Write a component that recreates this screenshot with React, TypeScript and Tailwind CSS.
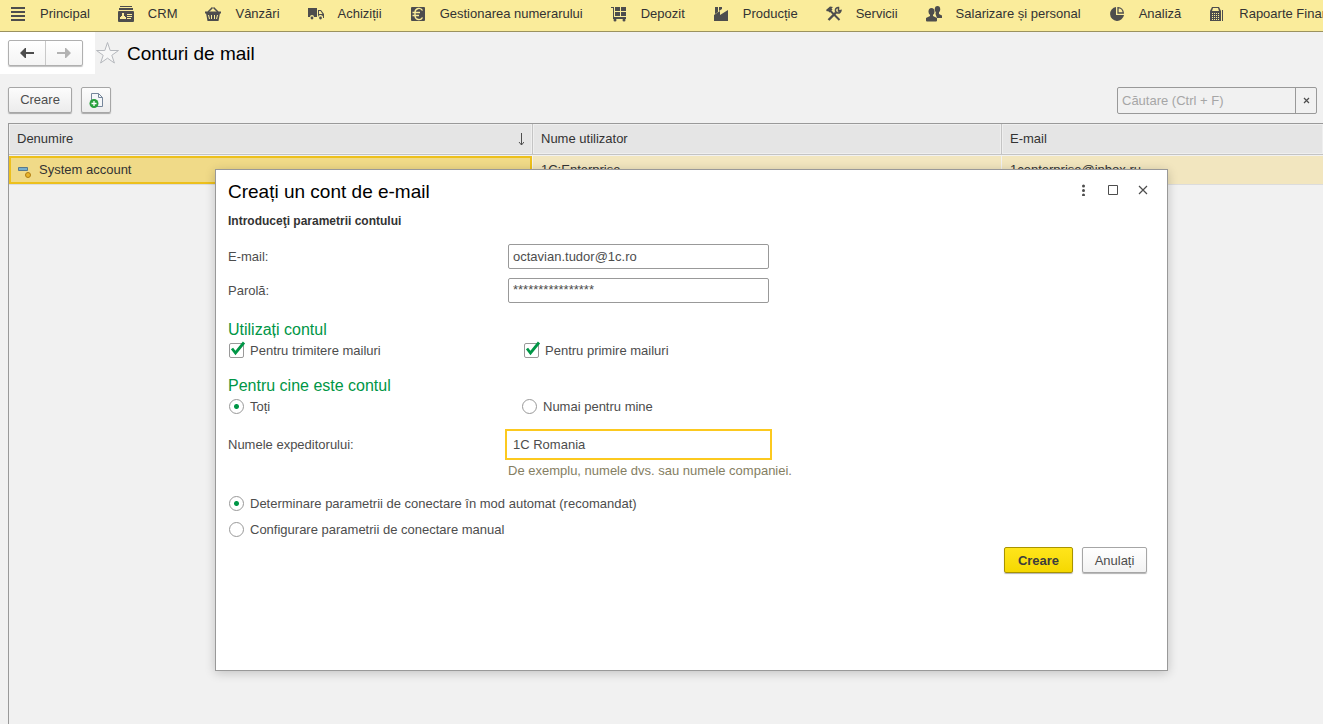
import { useState } from "react";
import type { ReactNode, InputHTMLAttributes } from "react";

interface IconProps {
  children: ReactNode;
}

function NavIcon({ children }: IconProps) {
  return (
    <svg viewBox="0 0 16 16" className="size-4 shrink-0 fill-[#4d4d4d]" aria-hidden="true">
      {children}
    </svg>
  );
}

const sections: { label: string; icon: ReactNode }[] = [
  {
    label: "Principal",
    icon: <path d="M1 1h14v2H1zM1 5h14v2H1zM1 9h14v2H1zM1 13h14v2H1z" />,
  },
  {
    label: "CRM",
    icon: (
      <>
        <path d="M2 0h12v1H2zM1 2h14v2H1z" />
        <path
          fillRule="evenodd"
          d="M1 5h14a1 1 0 0 1 1 1v9a1 1 0 0 1-1 1H1a1 1 0 0 1-1-1V6a1 1 0 0 1 1-1zM4 7v3H3v1H2v2h6v-2H7v-1H6V7zM9 8h5v1H9zM9 10h5v1H9zM9 12h4v1H9z"
        />
      </>
    ),
  },
  {
    label: "Vânzări",
    icon: (
      <>
        <path d="M3 6L7.500 1.500M13 6L8.500 1.500" fill="none" stroke="#4d4d4d" strokeWidth="1.500" />
        <path d="M0 5.500h16v2H0z" />
        <path
          fillRule="evenodd"
          d="M1 7h14l-1.500 8h-11zM3 9l1 4h1L4 9zM6 9v4h1V9zM9 9v4h1V9zM12 9l-1 4h1l1-4z"
        />
      </>
    ),
  },
  {
    label: "Achiziții",
    icon: (
      <>
        <path d="M0 2h9v9H6a2 2 0 0 0-4 0H0z" />
        <circle cx="4" cy="12" r="1.400" />
        <circle cx="12.500" cy="12" r="1.400" />
        <path
          fillRule="evenodd"
          d="M10 4h3l3 4v4h-1a2.500 2.500 0 0 0-5-1zM11 5v3h3.500L12.500 5z"
        />
      </>
    ),
  },
  {
    label: "Gestionarea numerarului",
    icon: (
      <>
        <rect x="1" y="1" width="14" height="14" rx="1" />
        <path
          d="M12.500 4.500A4 4 0 0 0 5 6v4a4 4 0 0 0 7.500 1.500M2.500 6.500H10M2.500 9.500H9"
          fill="none"
          stroke="#faec9b"
          strokeWidth="1.400"
        />
      </>
    ),
  },
  {
    label: "Depozit",
    icon: (
      <>
        <path d="M0 1h3v10h12v2H2V2H0z" />
        <path d="M4 1h5v4H4zM10 1h5v4h-5zM4 6h5v4H4zM10 6h5v4h-5z" />
        <circle cx="4" cy="14" r="1.500" />
        <circle cx="13" cy="14" r="1.500" />
      </>
    ),
  },
  {
    label: "Producție",
    icon: <path d="M2 1h3v5L2 8zM6 1h3v2L6 5zM1 9l6-4v4l8-5v11H1z" />,
  },
  {
    label: "Servicii",
    icon: (
      <>
        <path d="M2.500 14L10 6.500" fill="none" stroke="#4d4d4d" strokeWidth="2.400" />
        <path d="M4 4.500L13.500 14" fill="none" stroke="#4d4d4d" strokeWidth="2" />
        <path d="M0 4l4-3.500L7 1 5.500 2.500l1 1L3.500 6.500 2 5 1 5.500z" />
        <path
          d="M12.500 1.500a2.800 2.800 0 1 0 2.500 3L12.500 5z"
          fill="none"
          stroke="#4d4d4d"
          strokeWidth="1.500"
        />
      </>
    ),
  },
  {
    label: "Salarizare și personal",
    icon: (
      <>
        <ellipse cx="11.500" cy="3.200" rx="2.700" ry="3.200" />
        <path d="M10 5h3v3l3 1.500V12h-5L9.500 8z" />
        <ellipse cx="5.500" cy="5.500" rx="3" ry="3.500" />
        <path d="M4 8h3v2l4 2v2.500a1 1 0 0 1-1 1H1a1 1 0 0 1-1-1V12l4-2z" />
      </>
    ),
  },
  {
    label: "Analiză",
    icon: (
      <>
        <path d="M7 1v8h8A7 7 0 1 1 7 1z" />
        <path
          d="M9 1.700V7h5.300A5.500 5.500 0 0 0 9 1.700z"
          fill="none"
          stroke="#4d4d4d"
          strokeWidth="1.300"
        />
      </>
    ),
  },
  {
    label: "Rapoarte Financiare",
    icon: (
      <>
        <path
          fillRule="evenodd"
          d="M3 1h7l2 4v10H1V5zM4 2L3 5h7L9 2zM3 7v1h1V7zM5 7v1h1V7zM7 7v1h1V7zM9 7v1h1V7zM3 9v1h1V9zM5 9v1h1V9zM7 9v1h1V9zM9 9v1h1V9zM3 11v1h1v-1zM5 11v1h1v-1zM7 11v1h1v-1zM9 11v1h1v-1zM3 13v1h1v-1zM5 13v1h1v-1zM7 13v1h1v-1zM9 13v1h1v-1z"
        />
        <path d="M13 4h1v11h-1z" />
      </>
    ),
  },
];

const accounts = [
  { name: "System account", user: "1C:Enterprise", email: "1centerprise@inbox.ru" },
];

function SectionsBar() {
  return (
    <nav className="flex h-8 shrink-0 items-center gap-7 overflow-hidden border-b border-[#9b925f] bg-[#faec9b] pb-[3px] pl-[10px]">
      {sections.map((section) => (
        <a
          key={section.label}
          href="#"
          className="flex shrink-0 items-center gap-[14px] whitespace-nowrap"
        >
          <NavIcon>{section.icon}</NavIcon>
          {section.label}
        </a>
      ))}
    </nav>
  );
}

function Checkbox({ label, ...props }: { label: string } & InputHTMLAttributes<HTMLInputElement>) {
  return (
    <label className="flex h-4 items-start gap-[6px]">
      <span className="relative flex">
        <input
          type="checkbox"
          className="peer size-[15px] appearance-none rounded-xs border border-[#999] bg-white"
          {...props}
        />
        <svg
          viewBox="0 0 15 15"
          className="pointer-events-none absolute inset-0 hidden size-[15px] overflow-visible peer-checked:block"
          aria-hidden="true"
        >
          <path d="M3 5.500L6.500 10L15 -.5" fill="none" stroke="#009646" strokeWidth="2.800" />
        </svg>
      </span>
      {label}
    </label>
  );
}

function Radio({ label, ...props }: { label: string } & InputHTMLAttributes<HTMLInputElement>) {
  return (
    <label className="flex h-4 items-start gap-[6px]">
      <input
        type="radio"
        className="size-[15px] appearance-none rounded-full border border-[#999] bg-white checked:bg-[radial-gradient(circle,#009646_2px,transparent_3px)]"
        {...props}
      />
      {label}
    </label>
  );
}

function CreateAccountDialog() {
  const [audience, setAudience] = useState("all");
  const [mode, setMode] = useState("auto");

  return (
    <section
      role="dialog"
      aria-labelledby="dialog-title"
      className="absolute top-[169px] right-[155px] left-[215px] min-h-[502px] border border-[#999] bg-white text-[#4d4d4d] shadow-[0_2px_10px_rgba(0,0,0,0.2)]"
    >
      <header className="flex h-11 items-start justify-between pt-[10px] pr-[9px] pl-3">
        <h2 id="dialog-title" className="text-[19px] leading-6 text-black">
          Creați un cont de e-mail
        </h2>
        <div className="flex pt-1">
          <button type="button" aria-label="Mai multe" className="flex w-[30px] justify-center">
            <svg viewBox="0 0 12 12" className="size-3 fill-[#4d4d4d]">
              <circle cx="6.500" cy="2" r="1.500" />
              <circle cx="6.500" cy="6.500" r="1.500" />
              <circle cx="6.500" cy="11" r="1.500" />
            </svg>
          </button>
          <button type="button" aria-label="Maximizare" className="flex w-[30px] justify-center">
            <svg viewBox="0 0 12 12" className="size-3">
              <path d="M1.500 1.500h9v9h-9z" fill="none" stroke="#4d4d4d" />
            </svg>
          </button>
          <button type="button" aria-label="Închidere" className="flex w-[30px] justify-center">
            <svg viewBox="0 0 12 12" className="size-3">
              <path d="M2 2l8 8M10 2l-8 8" fill="none" stroke="#4d4d4d" strokeWidth="1.200" />
            </svg>
          </button>
        </div>
      </header>

      <form className="pr-5 pl-3" onSubmit={(e) => e.preventDefault()}>
        <p className="text-xs leading-[14px] font-bold text-[#333]">
          Introduceţi parametrii contului
        </p>

        {/* Credentials */}
        <div className="mt-4 grid grid-cols-[280px_261px] items-center gap-y-[9px]">
          <label htmlFor="email">E-mail:</label>
          <input
            id="email"
            type="text"
            defaultValue="octavian.tudor@1c.ro"
            className="h-[25px] rounded-xs border border-[#999] px-1 outline-none"
          />
          <label htmlFor="password">Parolă:</label>
          <input
            id="password"
            type="text"
            defaultValue="****************"
            className="h-[25px] rounded-xs border border-[#999] px-1 pb-[3px] outline-none"
          />
        </div>

        {/* Usage */}
        <h3 className="mt-[17px] text-base leading-5 text-[#009646]">Utilizați contul</h3>
        <div className="mt-[3px] grid grid-cols-[295px_1fr] pl-px">
          <Checkbox label="Pentru trimitere mailuri" defaultChecked />
          <Checkbox label="Pentru primire mailuri" defaultChecked />
        </div>

        {/* Audience */}
        <h3 className="mt-[17px] text-base leading-5 text-[#009646]">Pentru cine este contul</h3>
        <div className="mt-[3px] grid grid-cols-[293px_1fr] pl-px">
          <Radio
            label="Toți"
            name="audience"
            checked={audience === "all"}
            onChange={() => setAudience("all")}
          />
          <Radio
            label="Numai pentru mine"
            name="audience"
            checked={audience === "me"}
            onChange={() => setAudience("me")}
          />
        </div>

        <div className="mt-[17px] grid grid-cols-[280px_261px] items-center gap-y-[6px]">
          <label htmlFor="sender">Numele expeditorului:</label>
          <input
            id="sender"
            type="text"
            defaultValue="1C Romania"
            className="h-[25px] px-[5px] outline-2 outline-offset-1 outline-[#fcc91f]"
          />
          <p className="col-start-2 leading-4 whitespace-nowrap text-[#857e62]">
            De exemplu, numele dvs. sau numele companiei.
          </p>
        </div>

        {/* Connection mode */}
        <div className="mt-[17px] flex flex-col gap-[10px] pl-px">
          <Radio
            label="Determinare parametrii de conectare în mod automat (recomandat)"
            name="mode"
            checked={mode === "auto"}
            onChange={() => setMode("auto")}
          />
          <Radio
            label="Configurare parametrii de conectare manual"
            name="mode"
            checked={mode === "manual"}
            onChange={() => setMode("manual")}
          />
        </div>

        <div className="mt-[9px] flex justify-end gap-[9px]">
          <button
            type="submit"
            className="h-[26px] w-[69px] rounded-xs border border-[#a89300] bg-linear-to-b from-[#ffe51a] to-[#f5d800] pt-px font-bold text-[#3c3c3c] shadow-[0_1px_1px_rgba(0,0,0,0.3)]"
          >
            Creare
          </button>
          <button
            type="button"
            className="h-[26px] w-[65px] rounded-xs border border-[#a6a6a6] bg-linear-to-b from-white to-[#f2f2f2] pt-px shadow-[0_1px_1px_rgba(0,0,0,0.3)]"
          >
            Anulați
          </button>
        </div>
      </form>
    </section>
  );
}

export default function App() {
  return (
    <div className="relative flex min-h-screen flex-col overflow-hidden bg-[#f1f1f1] font-['Liberation_Sans',Arial,sans-serif] text-[13px] leading-4 text-[#333]">
      <SectionsBar />

      <header className="flex h-[42px] items-center">
        <div className="flex h-full w-[95px] items-center bg-white pl-2">
          <div className="flex h-[26px] w-[75px] rounded-xs border border-[#b0b0b0] bg-linear-to-b from-white to-[#f4f4f4] shadow-[0_1px_1px_rgba(0,0,0,0.25)]">
            <button type="button" aria-label="Înapoi" className="flex flex-1 items-center justify-center">
              <svg viewBox="0 0 14 10" className="h-[10px] w-[14px]">
                <path d="M5 0h1v4h8v2H6v4H5L0 5z" fill="#4d4d4d" />
              </svg>
            </button>
            <button
              type="button"
              aria-label="Înainte"
              className="flex flex-1 items-center justify-center border-l border-[#c9c9c9]"
            >
              <svg viewBox="0 0 14 10" className="h-[10px] w-[14px]">
                <path d="M8 0v4H0v2h8v4h1l5-5-5-5z" fill="#b3b3b3" />
              </svg>
            </button>
          </div>
        </div>
        <button type="button" aria-label="Favorite" className="ml-px">
          <svg viewBox="0 0 24 24" className="size-6">
            <path
              d="M11.500 1.500L14.200 9.500H22.500L15.800 14.300L18.400 22L11.500 17.200L4.600 22L7.200 14.300L.5 9.500H8.800z"
              fill="#f7f7f7"
              stroke="#b5b8bd"
            />
          </svg>
        </button>
        <h1 className="ml-[7px] pt-[2px] text-[19px] leading-6 text-black">Conturi de mail</h1>
      </header>

      <div className="mt-[13px] flex items-start gap-[9px] pr-[6px] pl-2">
        <button
          type="button"
          className="h-[26px] w-16 rounded-xs border border-[#a6a6a6] bg-linear-to-b from-[#fcfcfc] to-[#ececec] text-[#4d4d4d] shadow-[0_1px_1px_rgba(0,0,0,0.3)]"
        >
          Creare
        </button>
        <button
          type="button"
          aria-label="Creare prin copiere"
          className="flex h-[26px] w-[30px] items-center justify-center rounded-xs border border-[#a6a6a6] bg-linear-to-b from-[#fcfcfc] to-[#ececec] shadow-[0_1px_1px_rgba(0,0,0,0.3)]"
        >
          <svg viewBox="0 0 16 16" className="size-4">
            <path d="M3.500 1.500h7l4 4v9h-11z" fill="#f5f7f9" stroke="#75869a" />
            <path d="M10.500 1.500v4h4" fill="none" stroke="#75869a" />
            <circle cx="6" cy="11.500" r="4.500" fill="#28a03c" />
            <path d="M3.500 11.500h5M6 9v5" stroke="#fff" strokeWidth="1.300" />
          </svg>
        </button>
        <div className="ml-auto flex h-[27px] w-[200px] rounded-xs border border-[#999]">
          <input
            type="text"
            aria-label="Căutare"
            placeholder="Căutare (Ctrl + F)"
            className="min-w-0 flex-1 px-1 outline-none placeholder:text-[#a6a6a6]"
          />
          <button
            type="button"
            aria-label="Șterge"
            className="flex w-[21px] items-center justify-center border-l border-[#999]"
          >
            <svg viewBox="0 0 7 7" className="size-[7px]">
              <path d="M1 1l5 5M6 1L1 6" stroke="#4d4d4d" strokeWidth="1.200" />
            </svg>
          </button>
        </div>
      </div>

      <main className="mt-[9px] ml-2 flex-1 border-t border-l border-[#999]">
        <table className="w-full table-fixed border-separate border-spacing-0 text-left">
          <thead>
            <tr className="h-[31px] bg-[#e5e5e5]">
              <th className="w-[524px] border-r border-b border-[#c4c4c4] px-2 font-normal shadow-[inset_0_0_0_1px_#efefef]">
                <div className="flex items-center justify-between">
                  Denumire
                  <svg viewBox="0 0 7 13" className="h-[13px] w-[7px]">
                    <path d="M4.500 0v12M2 9l2.500 3L7 9" fill="none" stroke="#4d4d4d" />
                  </svg>
                </div>
              </th>
              <th className="w-[469px] border-r border-b border-[#c4c4c4] px-2 font-normal shadow-[inset_0_0_0_1px_#efefef]">
                Nume utilizator
              </th>
              <th className="border-b border-[#c4c4c4] px-2 font-normal shadow-[inset_0_0_0_1px_#efefef]">
                E-mail
              </th>
            </tr>
          </thead>
          <tbody>
            {accounts.map((account) => (
              <tr key={account.name} className="h-[30px] bg-[#f2e6bf]">
                <td className="border-t border-r border-b border-t-[#f1f1f1] border-r-[#f1f1f1] border-b-[#dcdcdc] bg-[#f0da88] pl-2 shadow-[inset_0_0_0_2px_#edc01c]">
                  <div className="flex items-center gap-[6px]">
                    <svg viewBox="0 0 16 16" className="size-4">
                      <path d="M1.500 5.500h9v3h-9z" fill="#78aecb" stroke="#58798c" />
                      <circle cx="11" cy="13" r="2.500" fill="#e8b52c" stroke="#b07d13" />
                    </svg>
                    {account.name}
                  </div>
                </td>
                <td className="border-t border-r border-b border-t-[#f1f1f1] border-r-[#f1f1f1] border-b-[#dcdcdc] px-2">
                  {account.user}
                </td>
                <td className="border-t border-b border-t-[#f1f1f1] border-b-[#dcdcdc] px-2">
                  {account.email}
                </td>
              </tr>
            ))}
          </tbody>
        </table>
      </main>

      <CreateAccountDialog />
    </div>
  );
}
